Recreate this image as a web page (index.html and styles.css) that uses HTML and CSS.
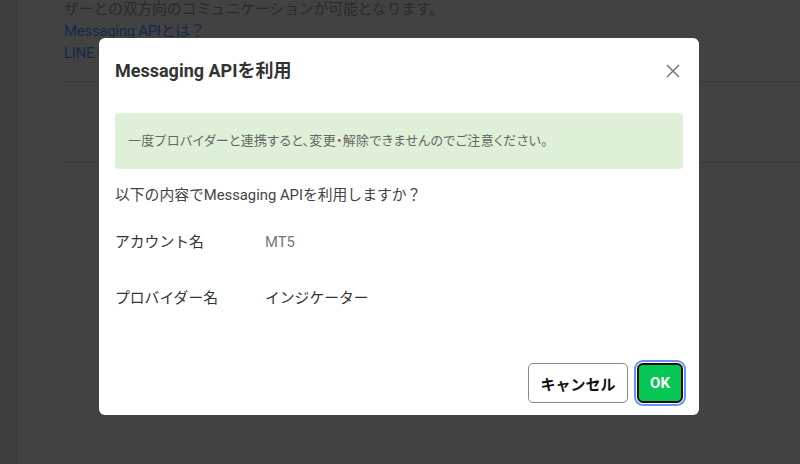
FILE: index.html
```html
<!DOCTYPE html>
<html lang="ja">
<head>
    <meta charset="utf-8">
    <title>Messaging APIを利用</title>
    <link rel="stylesheet" href="styles.css">
</head>
<body>
    <div class="page">
        <div class="side"></div>
        <div class="main">
            <div class="intro">
                <p>ザーとの双方向のコミュニケーションが可能となります。</p>
                <a href="#">Messaging APIとは？</a>
                <a href="#">LINE Official Account Managerでの設定方法</a>
            </div>
            <div class="sec"></div>
            <div class="sec"></div>
        </div>
    </div>

    <div class="layer">
        <div class="modal">
            <div class="hd">
                <h2>Messaging APIを利用</h2>
                <span class="close">
                    <svg width="14" height="14" viewBox="0 0 14 14"><path d="M1 1L13 13M13 1L1 13" stroke="#777" stroke-width="1.5" fill="none"/></svg>
                </span>
            </div>
            <div class="alert">一度プロバイダーと連携すると、変更・解除できませんのでご注意ください。</div>
            <p class="ask">以下の内容でMessaging APIを利用しますか？</p>
            <div class="li"><span class="k">アカウント名</span><span class="v gray">MT5</span></div>
            <div class="li"><span class="k">プロバイダー名</span><span class="v">インジケーター</span></div>
            <div class="ft">
                <button class="btn">キャンセル</button>
                <button class="btn btn-ok">OK</button>
            </div>
        </div>
    </div>
</body>
</html>
```

FILE: styles.css
```css
html, body { margin: 0; height: 100%; }
body { background: #424242; font-family: Roboto, "Noto Sans CJK JP", sans-serif; font-size: 15px; color: #2b2b2b; overflow: hidden; }
.page { display: flex; height: 100%; }
.side { width: 16px; background: #3f3f3f; border-right: 1px solid #3a3a3a; flex: none; }
.main { flex: 1; padding-left: 47px; }
.intro { margin-top: -2px; line-height: 22px; letter-spacing: -0.3px; }
.intro p { margin: 0; }
.intro a { display: block; color: #17294a; text-decoration: none; white-space: nowrap; }
.sec { height: 80px; border-top: 1px solid #383838; }
.intro + .sec { margin-top: 17px; }

.layer { position: fixed; inset: 0; display: flex; justify-content: center; align-items: flex-start; padding: 38px 2px 0 0; }
.modal { width: 568px; background: #fff; border-radius: 6px; padding: 0 16px 12px; }
.hd { display: flex; justify-content: space-between; align-items: center; padding-top: 20px; height: 26px; }
.hd h2 { margin: 0; font-size: 18px; font-weight: bold; color: #333; line-height: 26px; }
.close { display: flex; margin-right: 3px; cursor: pointer; }
.alert { margin-top: 29px; background: #dff0d8; border-radius: 4px; padding: 18px 13px; line-height: 20px; font-size: 13px; color: #666; font-feature-settings: "palt"; letter-spacing: 0.3px; }
.ask { margin: 15px 0 0; line-height: 22px; color: #444; font-size: 14.8px; }
.li { display: flex; line-height: 22px; margin-top: 25px; color: #333; font-size: 14.8px; }
.li + .li { margin-top: 34px; }
.li .k { width: 150px; flex: none; }
.li .v.gray { color: #777; }
.ft { display: flex; justify-content: flex-end; gap: 9px; margin-top: 54px; }
.btn { height: 40px; width: 100px; padding: 0; border: 1px solid #888; border-radius: 5px; background: #fff; font-family: inherit; font-size: 15px; font-weight: bold; color: #111; cursor: pointer; }
.btn-ok { width: 46px; background: #06c755; color: #fff; border: 2px solid #111; border-radius: 6px; box-shadow: 0 0 0 1px #fff, 0 0 0 3px #6d8ef5; }
```
